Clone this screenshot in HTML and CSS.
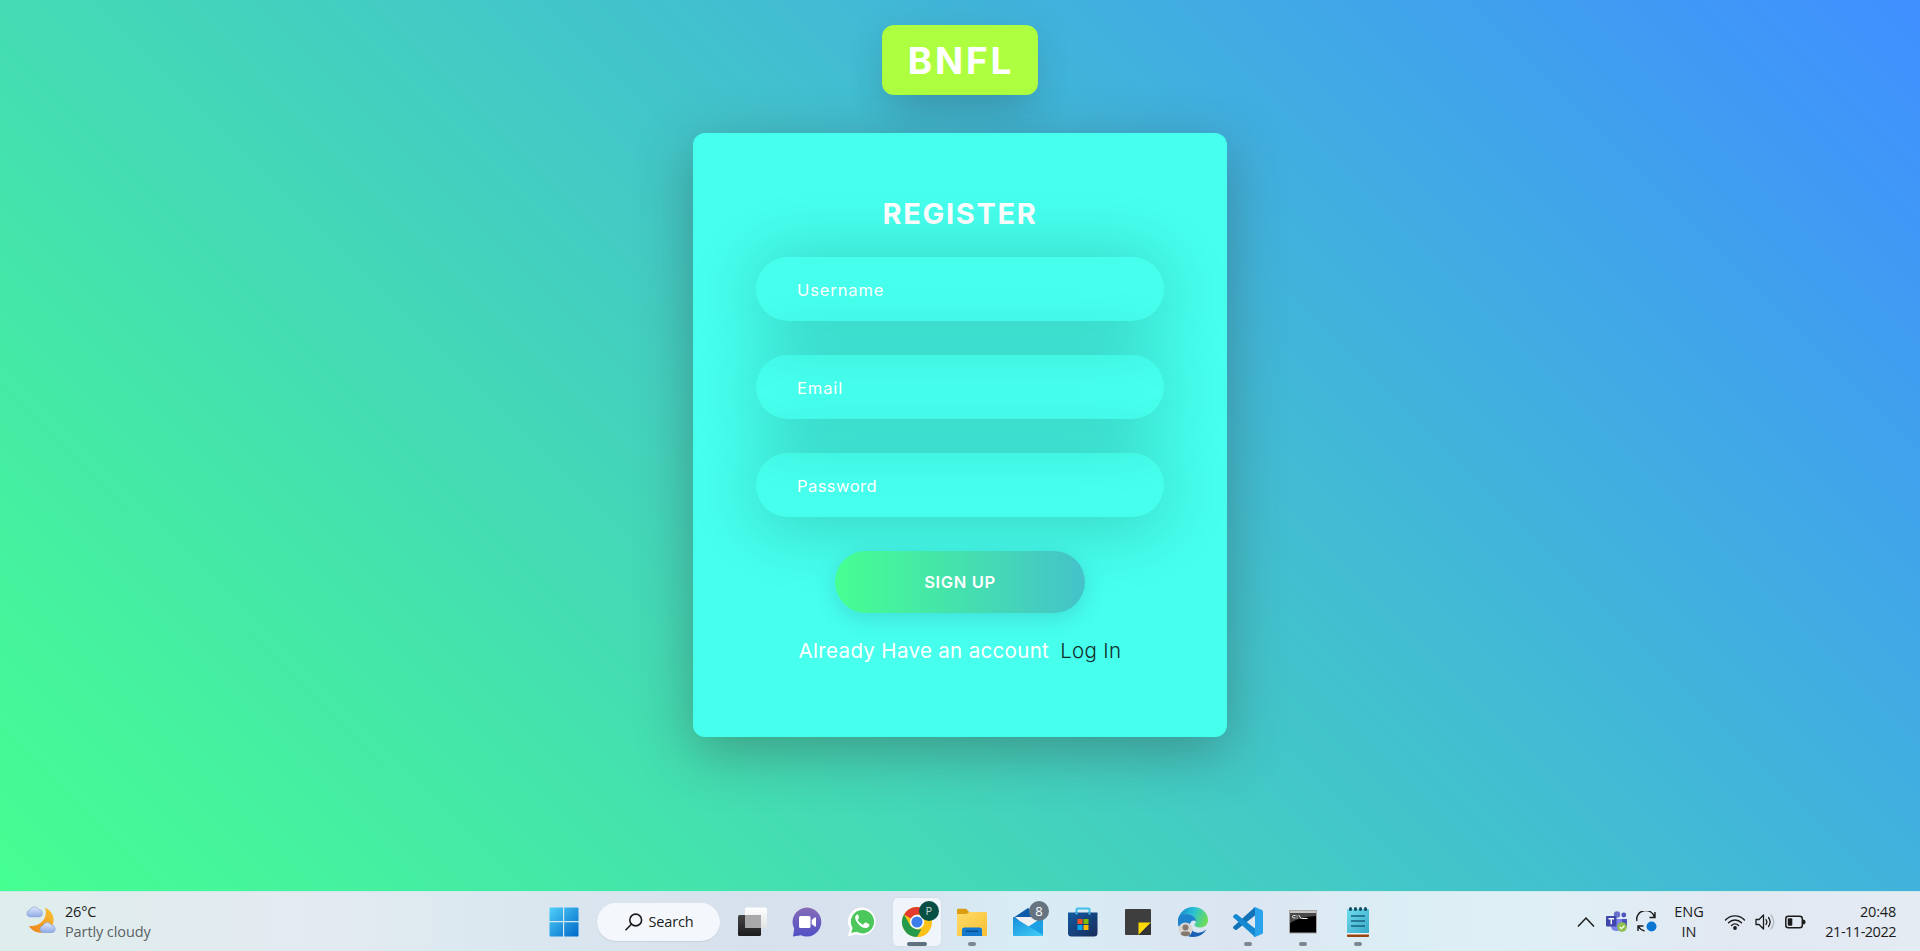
FILE: index.html
```html
<!DOCTYPE html>
<html lang="en">
<head>
<meta charset="utf-8">
<title>BNFL - Register</title>
<link rel="stylesheet" href="styles.css">
</head>
<body>
<main class="page">
  <h1 class="brand"><span>BNFL</span></h1>
  <form class="card">
    <h2 class="title"><span>REGISTER</span></h2>
    <div class="field"><span class="t-user">Username</span></div>
    <div class="field"><span class="t-mail">Email</span></div>
    <div class="field"><span class="t-pass">Password</span></div>
    <div class="submit"><span>SIGN UP</span></div>
    <p class="login"><span class="ask">Already Have an account</span><a class="link">Log In</a></p>
  </form>
</main>
<footer class="taskbar">
  <div class="weather">
    <svg width="32" height="32" viewBox="0 0 32 32">
      <defs>
        <linearGradient id="moon" x1="0" y1="1" x2="1" y2="0"><stop offset="0" stop-color="#f0801c"/><stop offset="1" stop-color="#f8c430"/></linearGradient>
        <linearGradient id="cloud" x1="0" y1="0" x2="0" y2="1"><stop offset="0" stop-color="#dfe9fb"/><stop offset="1" stop-color="#8fabe6"/></linearGradient>
      </defs>
      <path d="M20 2.500C27 6 30 12 28 19 25 28 11 32 4 21c10 1 20-7 16-18.500z" fill="url(#moon)"/>
      <path d="M4.500 11.800a3.500 3.500 0 0 1 .3-6.800 5 5 0 0 1 9-.5 3.800 3.800 0 0 1 1.200 7.300z" fill="url(#cloud)" stroke="#7d98d8" stroke-width=".6"/>
      <path d="M17.500 27.500a3.500 3.500 0 0 1 .3-6.800 5 5 0 0 1 9-.5 3.800 3.800 0 0 1 1 7.300z" fill="url(#cloud)" stroke="#7d98d8" stroke-width=".6"/>
    </svg>
    <div class="weather-text"><div class="temp">26°C</div><div class="sky">Partly cloudy</div></div>
  </div>
  <nav class="apps">
    <div class="app start"><svg width="30" height="30" viewBox="0 0 30 30">
      <defs><linearGradient id="win" x1="0" y1="0" x2="1" y2="1"><stop offset="0" stop-color="#4fd0fb"/><stop offset="1" stop-color="#0067c8"/></linearGradient></defs>
      <path d="M1.500 .5H14V14H.5V1.500a1 1 0 0 1 1-1zM15.200 .5H28.500a1 1 0 0 1 1 1V14H15.200zM.5 15.200H14V29.500H1.500a1 1 0 0 1-1-1zM15.200 15.200H29.500V28.500a1 1 0 0 1-1 1H15.200z" fill="url(#win)"/></svg></div>
    <div class="search"><svg width="18" height="18" viewBox="0 0 18 18" fill="none" stroke="#1b1b1b" stroke-width="1.600" stroke-linecap="round"><circle cx="10.700" cy="7" r="5.900"/><path d="M6.400 11.300 1 16.800"/></svg><span>Search</span></div>
    <div class="app"><svg width="30" height="30" viewBox="0 0 30 30">
      <defs>
        <linearGradient id="dk" x1="0" y1="0" x2="0" y2="1"><stop offset="0" stop-color="#444"/><stop offset="1" stop-color="#1c1c1c"/></linearGradient>
        <linearGradient id="lt" x1="0" y1="0" x2="0" y2="1"><stop offset="0" stop-color="#fff"/><stop offset="1" stop-color="#e2e3e5"/></linearGradient>
      </defs>
      <rect x="1" y="8" width="23" height="21" rx="1.500" fill="url(#dk)"/><rect x="8" y=".5" width="22" height="20.500" rx="1.500" fill="url(#lt)"/><path d="M8 8h16v13H9.500A1.500 1.500 0 0 1 8 19.500z" fill="#a9a9a9"/></svg></div>
    <div class="app"><svg width="30" height="30" viewBox="0 0 30 30">
      <defs><linearGradient id="chat" x1="0" y1="0" x2="0" y2="1"><stop offset="0" stop-color="#866bb8"/><stop offset="1" stop-color="#5050c4"/></linearGradient></defs>
      <path d="M15 .5A14.500 14.500 0 1 1 9 28.300L1 29.500l1.200-7.800A14.500 14.500 0 0 1 15 .5z" fill="url(#chat)"/><rect x="7" y="9" width="11.500" height="12" rx="1.500" fill="#fff"/><path d="M19.700 13l3.300-2.700q1 0 1 1v7.500q0 1-1 1L19.700 17z" fill="#fff"/></svg></div>
    <div class="app"><svg width="30" height="30" viewBox="0 0 30 30">
      <path d="M15.500.5a14 14 0 1 1-6.600 26.800L.8 29.500 3 21.700A14 14 0 0 1 15.500.5z" fill="#fff"/>
      <path d="M15.500 3a11.700 11.700 0 1 1-6 21.800L4.200 26l1.400-5.200A11.700 11.700 0 0 1 15.500 3z" fill="#4bc75c"/>
      <path d="M11.500 8.200c-.6-1.200-2-.7-2.700.3-1.200 1.700-.8 4.200 1.500 7.200 2.500 3.300 5.500 5.300 8.200 5.300 2 0 3.500-1.200 3.800-2.600.2-1-.1-1.200-.9-1.600l-2.500-1.200c-.7-.3-1-.2-1.400.4l-1 1.200c-.3.400-.7.300-1.200.1-2-.9-3.500-2.200-4.500-4-.3-.5 0-.8.300-1.100.7-.8.900-1.200.7-1.800z" fill="#fff"/></svg></div>
    <div class="app active"><svg width="32" height="32" viewBox="0 0 32 32">
      <circle cx="16" cy="16" r="15" fill="#fbc116"/>
      <path d="M16 16 3 8.500A15 15 0 0 1 29 8.500H16z" fill="#e33b2e"/>
      <path d="M3 8.500 9.500 19.700 16 23.500H22.500L16 31A15 15 0 0 1 3 8.500z" fill="#249a4a"/>
      <path d="M22.500 19.800 16 31Q24 31 28 25L26 14z" fill="#fbc116"/>
      <circle cx="16" cy="16" r="7.200" fill="#fff"/><circle cx="16" cy="16" r="5.600" fill="#3b7de9"/></svg><span class="badge profile">P</span><i class="mark wide"></i></div>
    <div class="app"><svg width="30" height="28" viewBox="0 0 30 28">
      <defs><linearGradient id="fold" x1="0" y1="0" x2="1" y2="1"><stop offset="0" stop-color="#ffdc69"/><stop offset="1" stop-color="#f8bf34"/></linearGradient></defs>
      <path d="M0 2a1.200 1.200 0 0 1 1.200-1.200H9l3 3V10H0z" fill="#dc9d12"/><path d="M0 6h9.500l3-2H29a1 1 0 0 1 1 1v22a1 1 0 0 1-1 1H1a1 1 0 0 1-1-1z" fill="url(#fold)"/>
      <path d="M5 28v-6q0-2.500 2.500-2.500h15Q25 19.500 25 22v6z" fill="#1279cf"/><rect x="8.500" y="22.500" width="13" height="1.500" rx=".7" fill="#0b4f94"/></svg><i class="mark"></i></div>
    <div class="app"><svg width="30" height="30" viewBox="0 0 30 30">
      <defs><linearGradient id="mail" x1="0" y1="0" x2="1" y2="1"><stop offset="0" stop-color="#178ddb"/><stop offset="1" stop-color="#43d1f7"/></linearGradient></defs>
      <path d="M0 11 15 1l15 10v4H0z" fill="#0c5cab"/><path d="M2 10h27L15 22z" fill="#eef0f4"/><path d="M30 10v18a1 1 0 0 1-1 1H1z" fill="#1ca0e4"/><path d="M0 10l30 18q0 1-1 1H1a1 1 0 0 1-1-1z" fill="url(#mail)"/></svg><span class="badge">8</span></div>
    <div class="app"><svg width="30" height="30" viewBox="0 0 30 30">
      <defs><linearGradient id="shop" x1="0" y1="0" x2="1" y2="1"><stop offset="0" stop-color="#1259a0"/><stop offset="1" stop-color="#182d5a"/></linearGradient></defs>
      <path d="M8.500 7V2.500q0-1 1-1h11q1 0 1 1V7" fill="none" stroke="#43bde9" stroke-width="2"/><path d="M0 5.500h29.500V26q0 3.500-3.500 3.500h-22.500Q0 29.500 0 26z" fill="url(#shop)"/><path d="M8.500 7.500V5.500M21.500 7.500V5.500" stroke="#43bde9" stroke-width="2"/>
      <path d="M9.500 12h5v5h-5z" fill="#f25022"/><path d="M15.500 12h5v5h-5z" fill="#7fba00"/><path d="M9.500 18h5v5h-5z" fill="#00a4ef"/><path d="M15.500 18h5v5h-5z" fill="#ffb900"/></svg></div>
    <div class="app"><svg width="26" height="26" viewBox="0 0 26 26"><path d="M1 0h24a1 1 0 0 1 1 1v24a1 1 0 0 1-1 1H1a1 1 0 0 1-1-1V1a1 1 0 0 1 1-1z" fill="#3e3e3e"/><path d="M13.500 13.500H26L13.500 26z" fill="#fddb0a"/><path d="M26 13.500V25a1 1 0 0 1-1 1H13.500z" fill="#333"/></svg></div>
    <div class="app"><svg width="30" height="30" viewBox="0 0 30 30">
      <defs><linearGradient id="edge1" x1="0" y1=".2" x2="1" y2=".5"><stop offset="0" stop-color="#1686cf"/><stop offset=".5" stop-color="#2bc3d4"/><stop offset="1" stop-color="#6ddc55"/></linearGradient></defs>
      <path d="M0 13A15 15 0 0 1 15 0c9 0 15 6 15 13 0 5-4 7.500-8 7.500-3.500 0-5.500-1.200-5.500-2.500 0-1 1.300-1.500 1.300-4C17.800 10 13 7.500 8.500 7.500 4 7.500 1 10 0 13z" fill="url(#edge1)"/>
      <path d="M0 14C0 9 4 7.500 8.500 7.500c4.500 0 9.300 2.500 9.300 6.500-2-2-6 0-6 4 0 5 5 8.500 10 7.500 3-.5 5-2 6.500-3C26 27 21 30 15 30 6.500 30 0 23 0 14z" fill="#1861b4"/>
      <path d="M8.500 7.500c4.500 0 9.300 2.500 9.300 6.500-1.500-1.400-4-.9-5.200 1C10 17 7 23 12 29 4 27 0 21 0 14 0 9 4 7.500 8.500 7.500z" fill="#1c83cf"/>
      <circle cx="7.500" cy="22.500" r="7" fill="#d8d4d0"/><circle cx="7.500" cy="20.500" r="3" fill="#83796f"/><path d="M2.800 27.500q0-3 2.500-3h4.400q2.500 0 2.500 3a7 7 0 0 1-9.400 0z" fill="#83796f"/></svg></div>
    <div class="app"><svg width="30" height="30" viewBox="0 0 30 30">
      <path d="M22 0v8.500L3.800 22.700q-1 .6-1.800 0L.4 21.200q-.7-.9 0-1.700z" fill="#1172b8"/><path d="M22 30v-8.500L3.800 7.300q-1-.6-1.800 0L.4 8.800q-.7.900 0 1.700z" fill="#1688d2"/><path d="M22 0l7 3q1 .5 1 1.500v21q0 1-1 1.500l-7 3q-1 0-1.500-.8Q22 29 22 27.500v-25Q22 1 20.500.8 21 .2 22 0z" fill="#2aa2ec"/></svg><i class="mark"></i></div>
    <div class="app"><svg width="28" height="24" viewBox="0 0 28 24"><rect x=".5" y=".5" width="27" height="22.500" fill="#000" stroke="#a5a5a5"/><path d="M1 1h26v2H1z" fill="#c5c5c5"/><path d="M1 3h26v3Q10 7 1 13z" fill="#484848"/><path d="M6 5.500H4.500q-1 0-1 1.200t1 1.200H6M8 6h.1M8 8h.1M10 5.500l2 3M13 8.500h5" fill="none" stroke="#eee" stroke-linecap="square"/></svg><i class="mark"></i></div>
    <div class="app"><svg width="22" height="30" viewBox="0 0 22 30">
      <defs><linearGradient id="note" x1="0" y1="0" x2="1" y2="1"><stop offset="0" stop-color="#6fdcec"/><stop offset="1" stop-color="#36a8ca"/></linearGradient></defs>
      <path d="M0 25h22v4q0 1-1 1H1q-1 0-1-1z" fill="#964411"/><path d="M0 25h22v2.500H0z" fill="#f2f2f2"/><path d="M0 3q0-1 1-1h20q1 0 1 1v23H0z" fill="url(#note)"/><g fill="#164d62"><rect x="2" width="3" height="4" rx="1.500"/><rect x="7" width="3" height="4" rx="1.500"/><rect x="12" width="3" height="4" rx="1.500"/><rect x="17" width="3" height="4" rx="1.500"/></g><path d="M4 9h14M4 14h14M4 19h14" stroke="#17627e" stroke-width="1.700"/></svg><i class="mark"></i></div>
  </nav>
  <div class="tray">
    <svg class="chevron" width="18" height="12" viewBox="0 0 18 12" fill="none" stroke="#1b1b1b" stroke-width="1.500"><path d="M1 10.500 9 2l8 8.500"/></svg>
    <svg class="teams" width="21" height="21" viewBox="0 0 21 21"><circle cx="11" cy="3.500" r="3.200" fill="#6a70cc"/><circle cx="17.800" cy="4" r="2.400" fill="#4b53bc"/><path d="M14 8h7v6q0 4-4 4h-3z" fill="#4b53bc"/><path d="M5 8h11v7q0 5-5.500 5T5 15z" fill="#7b83eb"/><rect y="5" width="10.500" height="10.500" rx="1" fill="#4047aa"/><path d="M2.500 7.800H8M5.250 7.800v5.500" stroke="#fff" stroke-width="1.400"/><circle cx="16" cy="16" r="4.800" fill="#8dc04e"/><path d="M13.700 16l1.700 1.700 3-3" fill="none" stroke="#fff" stroke-width="1.300"/></svg>
    <svg class="sync" width="21" height="21" viewBox="0 0 21 21" fill="none" stroke="#1b1b1b" stroke-width="1.400"><path d="M1 10a9 8.500 0 0 1 17.500-4M19 1v5.500h-5.500M2 20v-5h5.500M2 15q2.500 4 6.500 5"/><circle cx="15.500" cy="15.500" r="5" fill="#0b77d5" stroke="none"/></svg>
    <div class="lang">ENG<br>IN</div>
    <svg class="wifi" width="22" height="18" viewBox="0 0 22 18" fill="none" stroke="#1b1b1b" stroke-width="1.400" stroke-linecap="round"><path d="M1.500 7a13 13 0 0 1 19 0M4.500 9.800a9 9 0 0 1 13 0M7.500 12.500a5 5 0 0 1 7 0"/><circle cx="11" cy="15" r="1.200" fill="#1b1b1b"/></svg>
    <svg class="sound" width="20" height="18" viewBox="0 0 20 18" fill="none" stroke="#1b1b1b" stroke-width="1.300" stroke-linecap="round"><path d="M1 6.500h3L8.500 2v14L4 11.500H1z" stroke-linejoin="round"/><path d="M11 6.500q1.700 2.500 0 5M13.500 4.500q3.300 4.500 0 9"/><path d="M16 2q5.500 7 0 14" stroke="#b4bac0"/></svg>
    <svg class="battery" width="21" height="14" viewBox="0 0 21 14"><rect x=".8" y="1.200" width="16.500" height="11.500" rx="2.500" fill="none" stroke="#1b1b1b" stroke-width="1.500"/><rect x="2.800" y="3.200" width="4.500" height="7.500" rx="1" fill="#1b1b1b"/><path d="M18 4.500q2.500 0 2.500 2.500T18 9.500z" fill="#1b1b1b"/></svg>
    <div class="clock"><div class="time">20:48</div><div class="date">21-11-2022</div></div>
  </div>
</footer>
</body>
</html>
```
FILE: styles.css
```css
* { box-sizing: border-box; }
body { margin: 0; height: 951px; overflow: hidden; display: flex; flex-direction: column; font-family: Inter, sans-serif; color: #fff; }
.page { height: 891px; flex: none; display: flex; flex-direction: column; align-items: center; padding-top: 25px; background: linear-gradient(45deg, #46ff91, #3f8fff); }
.brand { margin: 0; width: 156px; height: 70px; border-radius: 12px; background: #adff3f; box-shadow: 0 24px 40px -12px rgba(50, 80, 90, .3), 0 5px 36px rgba(50, 80, 90, .12); display: flex; align-items: center; justify-content: center; font-size: 37px; line-height: 44px; font-weight: 700; padding: 2px 0 0 2px; letter-spacing: 2.800px; }
.card { margin: 38px 0 0; width: 534px; height: 604px; border-radius: 12px; background: #46ffed; box-shadow: 0 15px 55px rgba(50, 65, 60, .4); display: flex; flex-direction: column; align-items: center; padding-top: 62px; }
.title { margin: 0 0 26px; height: 36px; line-height: 38px; font-size: 29px; font-weight: 700; letter-spacing: 1.700px; }
.field { width: 408px; height: 64px; margin-bottom: 34px; border-radius: 32px; box-shadow: 0 5px 70px rgba(0, 0, 0, .21); padding: 1px 0 0 41px; display: flex; align-items: center; font-size: 16.500px; }
.t-user, .t-mail { letter-spacing: .9px; }
.t-pass { letter-spacing: .45px; }
.submit { width: 250px; height: 62px; border-radius: 31px; background: linear-gradient(90deg, #46ff91, #44c2ca); box-shadow: 0 5px 20px rgba(50, 120, 150, .25); display: flex; align-items: center; justify-content: center; font-size: 16.500px; font-weight: 600; letter-spacing: .65px; flex: none; }
.login { margin: 24px 0 0; height: 30px; display: flex; gap: 11px; font-size: 20.500px; line-height: 28px; letter-spacing: .33px; white-space: nowrap; }
.link { color: #12302e; font-weight: 300; }
.taskbar { height: 60px; flex: none; border-top: 1px solid #c9ebe9; background: linear-gradient(90deg, #dfedec, #e4eaf2 17%, #dce9f0 24%, #d7e1ed 39%, #d9e3ef 47%, #d8edf5 53%, #dbe5f1 64%, #dceef5 73%, #dfeff5 81%, #e2e8f2 90%, #e4ebf3); display: grid; grid-template-columns: 537px 850px 533px; color: #1b1b1b; font-family: "Open Sans", "Noto Sans", sans-serif; font-size: 14.500px; }
.weather { display: flex; align-items: flex-start; padding: 13px 0 0 25px; gap: 8px; }
.weather-text { line-height: 20px; margin-top: -3px; }
.temp { letter-spacing: -.2px; }
.sky { color: #5b6163; letter-spacing: -.1px; }
.apps { display: flex; align-items: center; }
.app { width: 55.100px; height: 48px; display: flex; align-items: center; justify-content: center; position: relative; flex: none; }
.start { width: 54.500px; }
.active::before { content: ""; position: absolute; inset: 0 3.500px; border-radius: 5px; background: #eff5fb; box-shadow: 0 0 1px 1px #d5dfe8; }
.active svg { position: relative; }
.search { width: 123px; height: 38px; margin: 0 5px; border-radius: 19px; background: #f4f8fc; box-shadow: 0 1px 1px #c6d0da; display: flex; align-items: center; padding-left: 28px; gap: 6px; letter-spacing: -.15px; flex: none; }
.badge { position: absolute; left: 29px; top: 3px; width: 20px; height: 20px; border-radius: 50%; background: #657480; color: #fff; font-size: 13px; line-height: 20px; text-align: center; }
.profile { background: #074f44; color: #c2d7cf; font-size: 11px; }
.mark { position: absolute; bottom: 0; width: 8px; height: 4px; border-radius: 2px; background: #7d8790; }
.wide { width: 20px; background: #5d717f; }
.tray { display: flex; align-items: center; padding-left: 190px; }
.tray svg { flex: none; }
.teams { margin-left: 11px; }
.sync { margin-left: 9px; }
.lang { width: 30px; margin-left: 17px; text-align: center; line-height: 20px; }
.wifi { margin-left: 20px; }
.sound { margin-left: 9px; }
.battery { margin-left: 10px; }
.clock { width: 76px; margin-left: 14px; text-align: right; line-height: 20px; letter-spacing: -.5px; white-space: nowrap; }
.time { letter-spacing: -.2px; }
```
